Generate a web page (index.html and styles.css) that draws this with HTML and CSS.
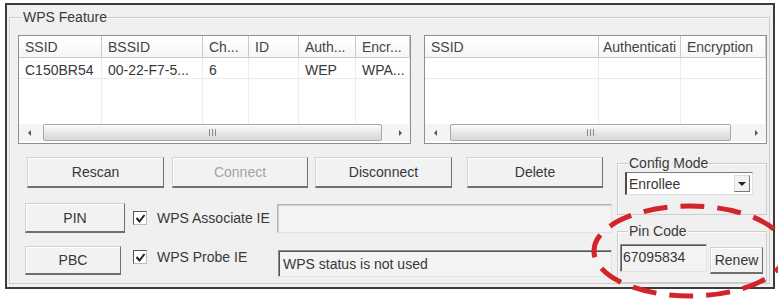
FILE: index.html
```html
<!DOCTYPE html>
<html lang="en">
<head>
  <meta charset="UTF-8">
  <meta name="viewport" content="width=device-width, initial-scale=1.0">
  <title>WPS Feature</title>
  <link rel="stylesheet" href="styles.css">
</head>
<body>
  <div class="window">
    <div class="group main-group">
      <span class="legend">WPS Feature</span>

      <div class="lists">
        <!-- AP list -->
        <div class="listview lv-left">
          <div class="lv-grid">
            <div class="hd">SSID</div>
            <div class="hd">BSSID</div>
            <div class="hd">Ch...</div>
            <div class="hd">ID</div>
            <div class="hd">Auth...</div>
            <div class="hd">Encr...</div>

            <div class="cell">C150BR54</div>
            <div class="cell">00-22-F7-5...</div>
            <div class="cell">6</div>
            <div class="cell"></div>
            <div class="cell">WEP</div>
            <div class="cell">WPA...</div>

            <div class="cell empty"></div>
            <div class="cell empty"></div>
            <div class="cell empty"></div>
            <div class="cell empty"></div>
            <div class="cell empty"></div>
            <div class="cell empty"></div>
          </div>
          <div class="hscroll">
            <span class="arrow"><i class="tri-left"></i></span>
            <span class="thumb"><i class="grip"></i></span>
            <span class="arrow"><i class="tri-right"></i></span>
          </div>
        </div>

        <!-- profile list -->
        <div class="listview lv-right">
          <div class="lv-grid">
            <div class="hd">SSID</div>
            <div class="hd hd-auth">Authenticati</div>
            <div class="hd">Encryption</div>

            <div class="cell"></div>
            <div class="cell"></div>
            <div class="cell"></div>

            <div class="cell empty"></div>
            <div class="cell empty"></div>
            <div class="cell empty"></div>
          </div>
          <div class="hscroll">
            <span class="arrow"><i class="tri-left"></i></span>
            <span class="thumb"><i class="grip"></i></span>
            <span class="arrow"><i class="tri-right"></i></span>
          </div>
        </div>
      </div>

      <div class="lower">
        <div class="left-col">
          <div class="btn-row">
            <button class="btn b-rescan">Rescan</button>
            <button class="btn b-connect" disabled>Connect</button>
            <button class="btn b-disconnect">Disconnect</button>
            <button class="btn b-delete">Delete</button>
          </div>

          <div class="wps-row row-pin">
            <button class="btn b-pin">PIN</button>
            <span class="check"><svg width="11" height="11" viewBox="0 0 11 11"><polyline points="1.5,5 4.5,8.5 9.5,2" fill="none" stroke="#222" stroke-width="2"/></svg></span>
            <span class="check-label">WPS Associate IE</span>
            <div class="field field-light"></div>
          </div>

          <div class="wps-row row-pbc">
            <button class="btn b-pbc">PBC</button>
            <span class="check"><svg width="11" height="11" viewBox="0 0 11 11"><polyline points="1.5,5 4.5,8.5 9.5,2" fill="none" stroke="#222" stroke-width="2"/></svg></span>
            <span class="check-label">WPS Probe IE</span>
            <div class="field field-status">WPS status is not used</div>
          </div>
        </div>

        <div class="right-col">
          <div class="group cfg-group">
            <span class="legend">Config Mode</span>
            <div class="combo">
              <span class="combo-text">Enrollee</span>
              <span class="combo-btn"><i class="tri-down"></i></span>
            </div>
          </div>
          <div class="group pin-group">
            <span class="legend">Pin Code</span>
            <div class="pin-line">
              <div class="field field-pin">67095834</div>
              <button class="btn b-renew">Renew</button>
            </div>
          </div>
        </div>
      </div>
    </div>
  </div>

  <!-- red marker round the pin code -->
  <svg class="marker" width="200" height="101" viewBox="0 0 200 101">
    <ellipse cx="102" cy="51" rx="96" ry="45" fill="none" stroke="#d3242b" stroke-width="5" stroke-dasharray="24 13"/>
  </svg>
</body>
</html>
```

FILE: styles.css
```css
body{
  margin: 0;
  background: #fff;
  font-family: "Liberation Sans", Arial, sans-serif;
  font-size: 14px;
  color: #383838;
  overflow: hidden;
}
.window{
  margin: 3px 0 0 5px;
  width: 766px;
  height: 282px;
  border: 2px solid #3c3c3c;
  background: #f0f0f0;
  display: flex;
}
/* group box (etched line + label on it) */
.group{
  position: relative;
  border: 1px solid #cdcdcd;
  box-shadow: inset 1px 1px #fafafa;
}
.legend{
  position: absolute;
  top: -8px;
  left: 10px;
  line-height: 14px;
  padding: 0 1px;
  background: #f0f0f0;
  color: #3a3a3a;
}
.main-group{
  flex: 1;
  margin: 12px 3px 3px 2px;
  padding: 17px 1px 0 8px;
  display: flex;
  flex-direction: column;
}
.main-group > .legend{
  left: 12px;
}

/* list views */
.lists{
  display: flex;
  gap: 13px;
}
.listview{
  height: 107px;
  border: 1px solid #8f8f8f;
  background: #fff;
  display: flex;
  flex-direction: column;
}
.lv-left{
  width: 391px;
}
.lv-right{
  width: 341px;
}
.lv-grid{
  flex: 1;
  display: grid;
  grid-template-rows: 22px 21px 1fr;
}
.lv-left .lv-grid{
  grid-template-columns: 83px 101px 46px 50px 57px 1fr;
}
.lv-right .lv-grid{
  grid-template-columns: 174px 82px 1fr;
}
.hd{
  border-right: 1px solid #c9c9c9;
  border-bottom: 1px solid #c9c9c9;
  background: linear-gradient(#fff, #f6f6f6);
  padding: 3px 0 0 6px;
  white-space: nowrap;
  overflow: hidden;
  color: #444;
}
.hd-auth{
  padding-left: 4px;
}
.cell{
  border-right: 1px solid #ececec;
  border-bottom: 1px solid #ececec;
  padding: 4px 0 0 6px;
  white-space: nowrap;
  overflow: hidden;
}
.cell.empty{
  border-bottom: none;
}

/* horizontal scrollbar */
.hscroll{
  height: 17px;
  display: flex;
  align-items: center;
  background: #f4f4f4;
  margin-bottom: 2px;
}
.arrow{
  width: 20px;
  height: 17px;
  display: flex;
  align-items: center;
  justify-content: center;
}
.tri-left{
  border-top: 3px solid transparent;
  border-bottom: 3px solid transparent;
  border-right: 3px solid #555;
}
.tri-right{
  border-top: 3px solid transparent;
  border-bottom: 3px solid transparent;
  border-left: 3px solid #555;
}
.thumb{
  flex: 1;
  height: 15px;
  margin: 0 4px;
  border: 1px solid #a8a8a8;
  border-radius: 2px;
  background: linear-gradient(#fbfbfb, #e4e4e4 60%, #d9d9d9);
  display: flex;
  align-items: center;
  justify-content: center;
}
.lv-left .thumb{
  margin-right: 8px;
}
.lv-right .thumb{
  margin: 0 15px 0 5px;
}
.grip{
  width: 7px;
  height: 7px;
  background: repeating-linear-gradient(90deg, #8a8a8a 0 1px, transparent 1px 3px);
}

/* lower part */
.lower{
  display: flex;
  justify-content: space-between;
  flex: 1;
}
.left-col{
  width: 594px;
}
.btn{
  font-family: inherit;
  font-size: 14px;
  color: #383838;
  background: #f2f2f2;
  border: 1px solid #d2d2d2;
  border-right-color: #6f6f6f;
  border-bottom: 2px solid #6f6f6f;
  box-shadow: inset 1px 1px #fff;
  padding: 0;
  height: 31px;
}
.btn:disabled{
  color: #a4a4a4;
}
.btn-row{
  display: flex;
  margin-top: 13px;
  padding-left: 9px;
}
.b-rescan{ width: 137px; }
.b-connect{ width: 136px; margin-left: 8px; }
.b-disconnect{ width: 137px; margin-left: 7px; }
.b-delete{ width: 136px; margin-left: 15px; }

.wps-row{
  display: flex;
  align-items: center;
  padding-left: 7px;
}
.row-pin{
  margin-top: 15px;
}
.row-pbc{
  margin-top: 13px;
  align-items: flex-start;
}
.b-pin{ width: 100px; height: 30px; }
.b-pbc{ width: 96px; height: 29px; }
.check{
  width: 12px;
  height: 12px;
  border: 1px solid #555;
  border-right-color: #bbb;
  border-bottom-color: #bbb;
  background: #fff;
  margin-left: 8px;
  display: flex;
  align-items: center;
  justify-content: center;
}
.row-pbc .check{
  margin: 4px 0 0 12px;
}
.check-label{
  margin-left: 10px;
  white-space: nowrap;
}
.row-pbc .check-label{
  margin-top: 3px;
}
.field{
  box-sizing: border-box;
  border: 1px solid #e2e2e2;
  border-top-color: #8c8c8c;
  border-left-color: #8c8c8c;
  box-shadow: inset 1px 1px #555;
  background: #f3f3f3;
  padding: 5px 0 0 4px;
  white-space: nowrap;
}
.field-light{
  margin-left: auto;
  width: 335px;
  height: 29px;
  border-top-color: #b4b4b4;
  border-left-color: #b4b4b4;
  box-shadow: inset 1px 1px #d0d0d0;
}
.field-status{
  margin: 4px 0 0 auto;
  width: 334px;
  height: 27px;
}

/* config mode + pin code */
.right-col{
  width: 150px;
  margin-right: 1px;
  display: flex;
  flex-direction: column;
}
.cfg-group{
  margin-top: 19px;
  height: 42px;
  padding: 8px 0 0 7px;
}
.combo{
  width: 125px;
  height: 21px;
  display: flex;
  align-items: center;
  border: 1px solid #e0e0e0;
  border-top-color: #7a7a7a;
  border-left: 2px solid #4a4a4a;
  background: #fff;
}
.combo-text{
  flex: 1;
  padding-left: 2px;
}
.combo-btn{
  width: 16px;
  height: 17px;
  margin-right: 2px;
  box-sizing: border-box;
  border: 1px solid #ddd;
  border-right-color: #777;
  border-bottom-color: #777;
  background: #f2f2f2;
  display: flex;
  align-items: center;
  justify-content: center;
}
.tri-down{
  border-left: 4px solid transparent;
  border-right: 4px solid transparent;
  border-top: 4px solid #222;
}
.pin-group{
  margin-top: 16px;
  flex: 1;
  padding: 12px 0 0 2px;
}
.pin-line{
  display: flex;
  align-items: flex-start;
}
.field-pin{
  width: 87px;
  height: 28px;
  padding: 4px 0 0 2px;
}
.b-renew{
  width: 53px;
  height: 27px;
  margin: 3px 0 0 3px;
}

.marker{
  position: absolute;
  left: 588px;
  top: 200px;
}
```
